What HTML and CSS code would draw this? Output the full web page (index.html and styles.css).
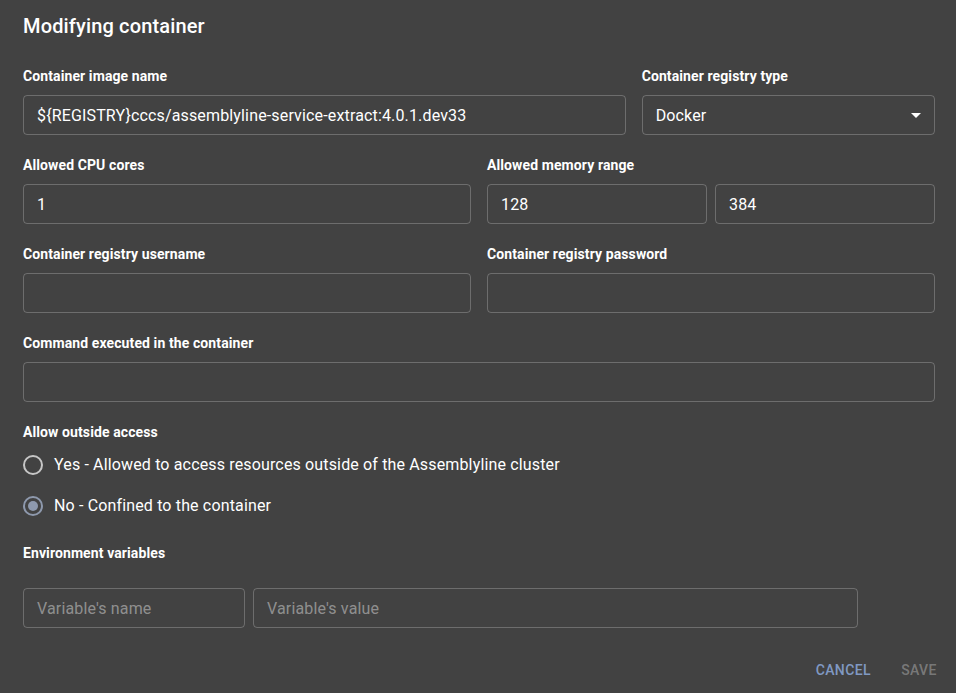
FILE: index.html
```html
<!DOCTYPE html>
<html lang="en">
<head>
<meta charset="utf-8">
<title>Modifying container</title>
<link rel="stylesheet" href="styles.css">
</head>
<body>
<div class="dialog">
  <h2 class="title">Modifying container</h2>
  <div class="content">
    <div class="grid">
      <div class="field span8">
        <div class="label">Container image name</div>
        <div class="input">${REGISTRY}cccs/assemblyline-service-extract:4.0.1.dev33</div>
      </div>
      <div class="field span4">
        <div class="label">Container registry type</div>
        <div class="input select">
          <span class="select-value">Docker</span>
          <svg class="arrow" width="24" height="24" viewBox="0 0 24 24"><path d="M7 10l5 5 5-5z" fill="#fff"/></svg>
        </div>
      </div>
      <div class="field span6">
        <div class="label">Allowed CPU cores</div>
        <div class="input">1</div>
      </div>
      <div class="field span6">
        <div class="label">Allowed memory range</div>
        <div class="pair">
          <div class="input">128</div>
          <div class="input">384</div>
        </div>
      </div>
      <div class="field span6">
        <div class="label">Container registry username</div>
        <div class="input"></div>
      </div>
      <div class="field span6">
        <div class="label">Container registry password</div>
        <div class="input"></div>
      </div>
      <div class="field span12">
        <div class="label">Command executed in the container</div>
        <div class="input"></div>
      </div>
    </div>

    <div class="label">Allow outside access</div>
    <div class="radios">
      <div class="radio-row"><span class="radio"></span><span>Yes - Allowed to access resources outside of the Assemblyline cluster</span></div>
      <div class="radio-row"><span class="radio checked"></span><span>No - Confined to the container</span></div>
    </div>

    <div class="label env-label">Environment variables</div>
    <div class="env-row">
      <div class="input placeholder name">Variable's name</div>
      <div class="input placeholder value">Variable's value</div>
    </div>
  </div>
  <div class="actions">
    <button class="btn cancel">Cancel</button>
    <button class="btn save">Save</button>
  </div>
</div>
</body>
</html>
```

FILE: styles.css
```css
* { box-sizing: border-box; }
html, body {
  margin: 0;
  padding: 0;
  background: #424242;
  height: 100%;
}
body {
  font-family: Roboto, "Liberation Sans", sans-serif;
  color: #fff;
}
.dialog {
  width: 956px;
  height: 693px;
  background: #424242;
}
.title {
  margin: 0;
  padding: 10px 23px 0;
  font-size: 20px;
  font-weight: 500;
  line-height: 32px;
  letter-spacing: 0.15px;
}
.content {
  padding: 23px 21px 0 23px;
}
.grid {
  display: grid;
  grid-template-columns: repeat(12, 1fr);
  column-gap: 16px;
  row-gap: 19px;
  margin-bottom: 19px;
}
.span8 { grid-column: span 8; }
.span4 { grid-column: span 4; }
.span6 { grid-column: span 6; }
.span12 { grid-column: span 12; }
.label {
  font-size: 14px;
  font-weight: 700;
  line-height: 22px;
  letter-spacing: 0.1px;
  margin-bottom: 8px;
}
.input {
  height: 40px;
  border: 1px solid rgba(255, 255, 255, 0.23);
  border-radius: 4px;
  padding: 0 13px;
  font-size: 16px;
  line-height: 40px;
  letter-spacing: 0.15px;
  color: #fff;
  white-space: nowrap;
  overflow: hidden;
}
.select {
  display: flex;
  align-items: center;
  justify-content: space-between;
  padding-right: 6px;
}
.select-value {
  padding-top: 2px;
}
.pair {
  display: flex;
  gap: 8px;
}
.pair .input { flex: 1; }
.radios {
  display: flex;
  flex-direction: column;
  margin-top: -7px;
}
.radio-row {
  height: 41px;
  display: flex;
  align-items: center;
  gap: 11px;
  font-size: 16px;
  letter-spacing: 0.15px;
}
.radio {
  width: 20px;
  height: 20px;
  border-radius: 50%;
  border: 2px solid rgba(255, 255, 255, 0.7);
  display: flex;
  align-items: center;
  justify-content: center;
}
.radio.checked {
  border-color: #8e99ad;
}
.radio.checked::after {
  content: "";
  width: 10px;
  height: 10px;
  border-radius: 50%;
  background: #8e99ad;
}
.env-label {
  margin-top: 16px;
  margin-bottom: 24px;
}
.env-row {
  display: flex;
  gap: 8px;
}
.env-row .name { width: 222px; }
.env-row .value { width: 605px; }
.placeholder {
  color: rgba(255, 255, 255, 0.42);
}
.actions {
  display: flex;
  justify-content: flex-end;
  gap: 8px;
  padding: 24px 5px 0 0;
}
.btn {
  background: none;
  border: 0;
  font-family: Roboto, "Liberation Sans", sans-serif;
  font-size: 14px;
  font-weight: 500;
  text-transform: uppercase;
  letter-spacing: 0.4px;
  min-width: 64px;
  height: 36px;
  padding: 6px 8px;
  line-height: 24px;
}
.cancel { color: #8099c2; }
.save { color: rgba(255, 255, 255, 0.3); }
```
